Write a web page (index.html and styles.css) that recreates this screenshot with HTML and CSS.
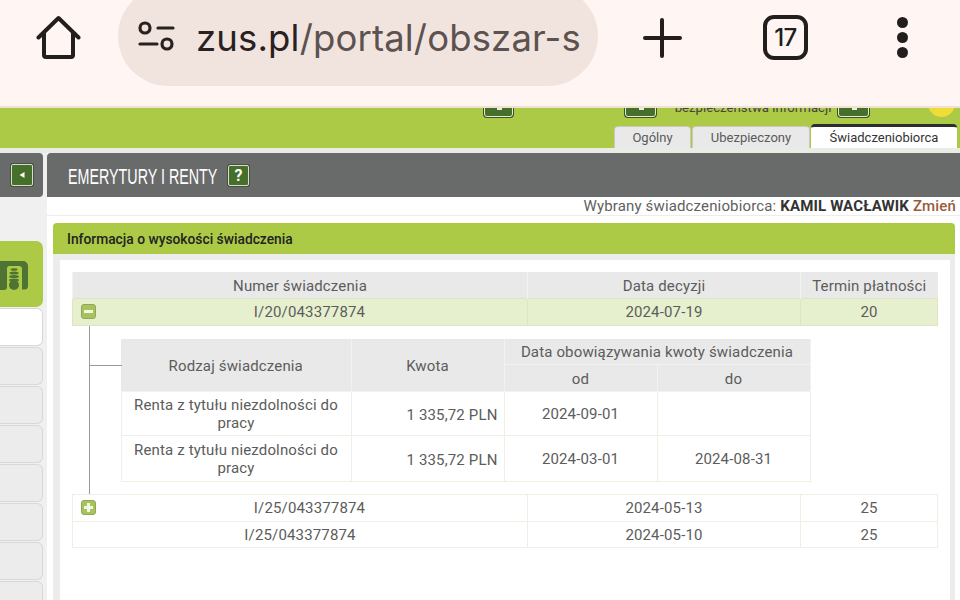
FILE: index.html
```html
<!DOCTYPE html>
<html lang="pl">
<head>
<meta charset="utf-8">
<title>Emerytury i renty</title>
<link rel="stylesheet" href="styles.css">
</head>
<body>
<div class="page">
  <header class="browser">
    <button class="bicon home" aria-label="Start">
      <svg width="46" height="46" viewBox="0 0 46 46"><path d="M2.500 23.500 22.500 4 42.500 23.500M8 18.500V41a2 2 0 0 0 2 2H35a2 2 0 0 0 2-2V18.500" fill="none" stroke="#221e1d" stroke-width="4" stroke-linejoin="round" stroke-linecap="round"/></svg>
    </button>
    <div class="pill">
      <svg class="tune" width="38" height="32" viewBox="0 0 38 32"><circle cx="7" cy="8" r="5" fill="none" stroke="#29211f" stroke-width="3.200"/><path d="M20 8H35M2 24H19" stroke="#29211f" stroke-width="3.200" stroke-linecap="round"/><circle cx="29" cy="24" r="5" fill="none" stroke="#29211f" stroke-width="3.200"/></svg>
      <span class="url"><span class="host">zus.pl</span>/portal/obszar-s</span>
    </div>
    <button class="bicon plus" aria-label="Nowa karta">
      <svg width="42" height="42" viewBox="0 0 42 42"><path d="M21 3V39M4 21H39" stroke="#221e1d" stroke-width="4" stroke-linecap="round"/></svg>
    </button>
    <div class="tabcount">17</div>
    <div class="dots"><i></i><i></i><i></i></div>
  </header>

  <section class="greenbar">
    <div class="tools">
      <span class="toolbtn wide"></span>
      <span class="toolgap"></span>
      <span class="toolbtn"></span>
      <span class="secure">bezpieczeństwa informacji</span>
      <span class="toolbtn"></span>
      <span class="sun"></span>
    </div>
    <nav class="tabs">
      <a class="tab t1">Ogólny</a>
      <a class="tab t2">Ubezpieczony</a>
      <a class="tab t3 on">Świadczeniobiorca</a>
    </nav>
  </section>
  <div class="strip"></div>

  <div class="body">
    <aside class="side">
      <div class="sidehead"><span class="collapse"><svg width="8" height="8" viewBox="0 0 8 8"><path d="M6.500 1V7L1.500 4Z" fill="#fff"/></svg></span></div>
      <div class="sidetabs">
        <div class="stab active">
          <svg width="29" height="31" viewBox="0 0 29 31"><path d="M-4 31V6a5 5 0 0 1 5-5H23a5 5 0 0 1 5 5V26a3.500 3.500 0 0 1-3.500 3.500H22V9a3 3 0 0 0-3-3H9.500A2.500 2.500 0 0 0 7 8.500V27a3 3 0 0 1-3 3H-4Z" fill="#4f7332"/><g fill="#4f7332"><ellipse cx="14" cy="9.500" rx="3.500" ry="1.300"/><ellipse cx="14" cy="13" rx="4.500" ry="1.500"/><ellipse cx="14" cy="16.500" rx="5" ry="1.600"/><ellipse cx="14" cy="20" rx="5" ry="1.600"/><circle cx="14" cy="25" r="5"/></g></svg>
        </div>
        <div class="stab white"></div>
        <div class="stab"></div>
        <div class="stab"></div>
        <div class="stab"></div>
        <div class="stab"></div>
        <div class="stab"></div>
        <div class="stab"></div>
        <div class="stab"></div>
      </div>
    </aside>

    <main class="main">
      <div class="mainhead">
        <h1>EMERYTURY I RENTY</h1>
        <span class="help">?</span>
      </div>
      <div class="chosen">Wybrany świadczeniobiorca: <b>KAMIL WACŁAWIK</b> <a>Zmień</a></div>
      <section class="panel">
        <h2>Informacja o wysokości świadczenia</h2>
        <div class="inner">
          <table class="outer">
            <colgroup><col class="c1"><col class="c2"><col class="c3"></colgroup>
            <thead>
              <tr><th>Numer świadczenia</th><th>Data decyzji</th><th>Termin płatności</th></tr>
            </thead>
            <tbody>
              <tr class="open">
                <td class="num"><span class="tog minus"></span>I/20/043377874</td><td>2024-07-19</td><td>20</td>
              </tr>
              <tr class="nest">
                <td colspan="3">
                  <span class="vline"></span><span class="hline"></span>
                  <table class="sub">
                    <colgroup><col class="s1"><col class="s2"><col class="s3"><col class="s4"></colgroup>
                    <thead>
                      <tr class="h1r"><th rowspan="2">Rodzaj świadczenia</th><th rowspan="2">Kwota</th><th colspan="2">Data obowiązywania kwoty świadczenia</th></tr>
                      <tr class="h2r"><th>od</th><th>do</th></tr>
                    </thead>
                    <tbody>
                      <tr><td>Renta z tytułu niezdolności do pracy</td><td class="amt">1 335,72 PLN</td><td>2024-09-01</td><td></td></tr>
                      <tr><td>Renta z tytułu niezdolności do pracy</td><td class="amt">1 335,72 PLN</td><td>2024-03-01</td><td>2024-08-31</td></tr>
                    </tbody>
                  </table>
                </td>
              </tr>
              <tr class="plain">
                <td class="num"><span class="tog plusb"></span>I/25/043377874</td><td>2024-05-13</td><td>25</td>
              </tr>
              <tr class="plain last">
                <td>I/25/043377874</td><td>2024-05-10</td><td>25</td>
              </tr>
            </tbody>
          </table>
        </div>
      </section>
    </main>
  </div>
</div>
</body>
</html>
```
FILE: styles.css
```css
* { box-sizing: border-box; }
html, body { margin: 0; height: 100%; }
body { font-family: Roboto, "Liberation Sans", sans-serif; background: #fff; overflow: hidden; }
.page { width: 960px; height: 600px; overflow: hidden; display: flex; flex-direction: column; }

.browser { height: 108px; flex: none; background: #fff6f3; border-bottom: 2px solid #efe3d0; display: flex; align-items: flex-start; overflow: hidden; }
.bicon { border: 0; background: none; padding: 0; display: flex; }
.home { margin: 14px 0 0 36px; }
.pill { width: 480px; height: 100px; margin: -14px 0 0 36px; flex: none; border-radius: 50px; background: #f1e4df; display: flex; align-items: center; padding-left: 20px; }
.tune { flex: none; }
.url { margin-left: 20px; padding-top: 4px; font-family: Inter, Roboto, sans-serif; font-size: 36.500px; color: #5c5250; white-space: nowrap; letter-spacing: .15px; }
.host { color: #29211f; }
.plus { margin: 17px 0 0 43px; }
.tabcount { margin: 15px 0 0 80px; width: 45px; height: 45px; border: 4px solid #221e1d; border-radius: 11px; font-family: Inter, Roboto, sans-serif; font-size: 24px; font-weight: 500; letter-spacing: -.5px; color: #221e1d; display: flex; align-items: center; justify-content: center; }
.dots { margin: 17px 0 0 89px; width: 11px; display: flex; flex-direction: column; gap: 4px; }
.dots i { width: 11px; height: 11px; border-radius: 50%; background: #221e1d; }

.greenbar { height: 40px; flex: none; background: #acca46; display: flex; flex-direction: column; overflow: hidden; }
.tools { height: 18px; flex: none; display: flex; justify-content: flex-end; align-items: flex-start; padding-right: 5px; margin-top: -9px; }
.toolbtn { position: relative; width: 31px; height: 18px; border: 1px solid #e3eccb; border-radius: 3px; background: #466f2c; box-shadow: 0 0 0 1px #3b4f2a; }
.toolbtn::after { content: ""; position: absolute; left: 50%; bottom: 6px; width: 5px; height: 2px; margin-left: -2px; background: #e8eedb; }
.toolbtn.wide { width: 29px; }
.toolgap { width: 112px; }
.secure { width: 182px; padding-left: 12px; text-align: center; font-size: 13.200px; line-height: 18px; height: 18px; color: #444; white-space: nowrap; }
.sun { width: 27px; height: 27px; margin: -9px 0 0 59px; border-radius: 50%; background: #f1dc37; }
.tabs { display: flex; justify-content: flex-end; padding-right: 3px; margin-top: 9px; height: 22px; gap: 1px; }
.tab { height: 22px; border: 1px solid #c9c9b8; border-bottom: 0; border-radius: 4px 4px 0 0; background: #e9e9e9; font-size: 13px; color: #5a5a5a; display: flex; align-items: center; justify-content: center; }
.t1 { width: 77px; }
.t2 { width: 118px; }
.t3 { width: 146px; }
.tab.on { height: 24px; margin-top: -2px; background: #fff; color: #333; border: 0; border-top: 3px solid #2d2d2d; }

.strip { height: 5px; flex: none; background: #e9ece4; }

.body { flex: 1; display: flex; min-height: 0; }
.side { width: 47px; flex: none; background: #f0f0f0; display: flex; flex-direction: column; }
.sidehead { width: 43px; height: 44px; background: #696a6a; border-radius: 0 4px 4px 0; display: flex; align-items: center; justify-content: flex-end; padding-right: 10px; flex: none; }
.collapse { width: 22px; height: 22px; background: #466f2c; border: 1px solid #d6e0c8; border-radius: 2px; display: flex; align-items: center; justify-content: center; box-shadow: 0 0 0 1px #4a4f46; }
.sidetabs { margin-top: 44px; width: 43px; display: flex; flex-direction: column; gap: 1px; }
.stab { height: 38px; background: #ececec; border: 1px solid #d8d8d8; border-left: 0; border-radius: 0 6px 6px 0; flex: none; }
.stab.active { height: 66px; padding-top: 3px; background: #acca46; border: 0; display: flex; align-items: center; border-radius: 0 7px 7px 0; overflow: hidden; }
.stab.white { background: #fff; }

.main { flex: 1; min-width: 0; display: flex; flex-direction: column; }
.mainhead { height: 44px; flex: none; background: #696a6a; border-radius: 4px 0 0 0; display: flex; align-items: center; padding-left: 21px; gap: 11px; }
.mainhead h1 { margin: 0; padding-top: 3px; width: 149px; flex: none; white-space: nowrap; font-family: "Liberation Sans", sans-serif; font-weight: 400; font-size: 22px; color: #fff; transform: scaleX(.65); transform-origin: left center; }
.help { width: 21px; height: 21px; background: #466f2c; border: 1px solid #d6e0c8; border-radius: 2px; color: #fff; font-size: 16px; font-weight: 700; display: flex; align-items: center; justify-content: center; box-shadow: 0 0 0 1px #4a4f46; }
.chosen { height: 19px; flex: none; border-bottom: 1px solid #ececec; text-align: right; font-size: 15px; letter-spacing: .15px; line-height: 19px; color: #5f5f5f; padding-right: 4px; white-space: nowrap; }
.chosen b { color: #333; font-weight: 700; }
.chosen a { color: #9a5b3c; font-weight: 500; }

.panel { margin: 7px 5px 0 6px; flex: 1; background: #ececec; border-radius: 4px 4px 0 0; display: flex; flex-direction: column; min-height: 0; }
.panel h2 { margin: 0; height: 31px; flex: none; background: #acca46; border-radius: 4px 4px 0 0; font-size: 13.800px; font-weight: 500; line-height: 32px; color: #222; padding-left: 14px; }
.inner { margin: 6px 5px 0 7px; flex: 1; background: #fff; padding: 12px 13px 0 12px; }

table { border-collapse: collapse; table-layout: fixed; }
.outer { width: 865px; font-size: 15px; letter-spacing: .15px; color: #5c5c5c; }
.c1 { width: 455px; }
.c2 { width: 273px; }
.c3 { width: 137px; }
.outer > thead th { height: 26px; padding: 2px 0 0; background: #e9e9e9; font-weight: 400; border-left: 1px solid #f2f2f2; text-align: center; }
.outer > tbody > tr > td { padding: 0; text-align: center; }
.open td { height: 27px; background: #e6f0cf; border: 1px solid #dde5c4; }
.plain td { height: 27px; border: 1px solid #f0efe6; }
.plain.last td { height: 26px; }
.num { position: relative; }
.outer > tbody > tr > td.num { padding-left: 19px; }
.tog { position: absolute; left: 8px; top: 5px; width: 15px; height: 15px; border: 1px solid #8fa75a; border-radius: 3px; background: #a9c35c; }
.tog::after { content: ""; position: absolute; left: 2px; right: 2px; top: 5px; height: 3px; background: #f3f6e4; }
.tog.plusb::before { content: ""; position: absolute; left: 5px; width: 3px; top: 2px; bottom: 2px; background: #f3f6e4; }
.nest > td { position: relative; height: 168px; }
.outer > tbody > .nest > td { padding: 13px 0 12px 48px; border: 0; }
.vline { position: absolute; left: 16px; top: 0; bottom: 0; width: 1px; background: #9a9a9a; }
.hline { position: absolute; left: 17px; top: 39px; width: 32px; height: 1px; background: #9a9a9a; }
.sub { width: 689px; }
.s1 { width: 230px; }
.s2 { width: 153px; }
.s3 { width: 153px; }
.s4 { width: 153px; }
.sub th { background: #e9e9e9; font-weight: 400; padding: 2px 0 0; border: 1px solid #f2f2f2; border-top: 0; text-align: center; }
.sub th:first-child { border-left: 0; }
.h1r th { height: 26px; }
.h2r th { height: 27px; }
.sub td { padding: 2px 8px 1px; border: 1px solid #f0efe6; text-align: center; line-height: 18px; height: 44px; }
.sub tr:last-child td { height: 46px; }
.sub td.amt { text-align: right; padding: 3px 6px 0 8px; }
```
